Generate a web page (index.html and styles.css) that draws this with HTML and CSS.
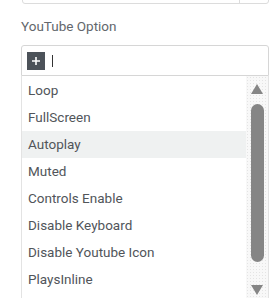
FILE: index.html
```html
<!DOCTYPE html>
<html>
<head>
<meta charset="utf-8">
<link rel="stylesheet" href="styles.css">
</head>
<body>
<div class="field">
  <div class="prev"><div class="prev-divider"></div></div>
  <div class="label">YouTube Option</div>
  <div class="select">
    <div class="input">
      <span class="plus"><svg width="10" height="10" viewBox="0 0 10 10"><path d="M5 1v8M1 5h8" stroke="#fff" stroke-width="1.6"/></svg></span>
      <span class="caret"></span>
    </div>
    <div class="dropdown">
      <ul class="options">
        <li>Loop</li>
        <li>FullScreen</li>
        <li class="active">Autoplay</li>
        <li>Muted</li>
        <li>Controls Enable</li>
        <li>Disable Keyboard</li>
        <li>Disable Youtube Icon</li>
        <li>PlaysInline</li>
        <li>Related Videos</li>
      </ul>
      <div class="scrollbar">
        <span class="arrow up"></span>
        <span class="thumb"></span>
        <span class="arrow down"></span>
      </div>
    </div>
  </div>
</div>
</body>
</html>
```
FILE: styles.css
```css
html, body {
  margin: 0;
  padding: 0;
  background: #fff;
  overflow: hidden;
  height: 298px;
}
body {
  font-family: Roboto, "Liberation Sans", sans-serif;
  font-size: 13.5px;
  color: #51555a;
}
.field {
  padding-left: 21px;
  width: 248px;
}
.prev {
  height: 30px;
  margin-top: -28px;
  border: 1px solid #dcdcdc;
  border-radius: 3px;
  margin-left: 1px;
  position: relative;
}
.prev-divider {
  position: absolute;
  right: 28px;
  top: 0;
  bottom: 0;
  border-left: 1px solid #dcdcdc;
}
.label {
  margin-top: 14px;
  line-height: 17px;
  color: #63676c;
}
.select {
  margin-top: 10px;
}
.input {
  border: 1px solid #d6d6d6;
  border-radius: 3px 3px 0 0;
  display: flex;
  align-items: flex-start;
  padding: 6px 5px 0;
  box-sizing: border-box;
  height: 31px;
}
.plus {
  width: 18px;
  height: 18px;
  background: #4c5259;
  display: flex;
  align-items: center;
  justify-content: center;
}
.caret {
  width: 1px;
  height: 12px;
  background: #333;
  margin-left: 7px;
  margin-top: 3px;
}
.dropdown {
  display: flex;
  border-left: 1px solid #e3e3e3;
  border-right: 1px solid #e3e3e3;
  padding-top: 1px;
  height: 300px;
}
.options {
  list-style: none;
  margin: 0;
  padding: 0;
  flex: 1;
}
.options li {
  height: 27px;
  line-height: 27px;
  padding-left: 6px;
  white-space: nowrap;
}
.options li.active {
  background: #eff1f1;
}
.scrollbar {
  width: 22px;
  margin-top: -1px;
  background-color: #f8f8f8;
  background-image: radial-gradient(circle, #e4e4e4 0.6px, transparent 0.8px);
  background-size: 3px 3px;
  display: flex;
  flex-direction: column;
  align-items: flex-start;
  padding-left: 5px;
  box-sizing: border-box;
}
.arrow {
  width: 0;
  height: 0;
  border-left: 6.5px solid transparent;
  border-right: 6.5px solid transparent;
}
.arrow.up {
  border-bottom: 10px solid #858585;
  margin-top: 8px;
}
.thumb {
  width: 13px;
  height: 158px;
  border-radius: 6.5px;
  background: #858585;
  margin-top: 10px;
}
.arrow.down {
  border-top: 10px solid #858585;
  margin-top: 23px;
}
```
